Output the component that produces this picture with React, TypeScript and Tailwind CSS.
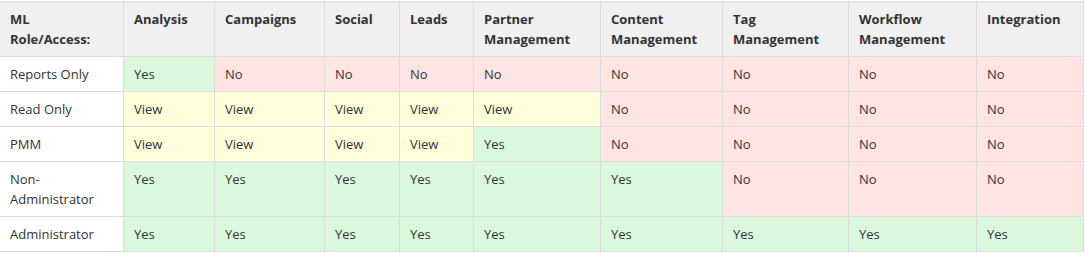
import React from "react";

type V = "Yes" | "No" | "View";

const headers = [
  "ML Role/Access:",
  "Analysis",
  "Campaigns",
  "Social",
  "Leads",
  "Partner Management",
  "Content Management",
  "Tag Management",
  "Workflow Management",
  "Integration",
];

const widths = [
  "w-[124px]",
  "w-[91px]",
  "w-[110px]",
  "w-[75px]",
  "w-[74px]",
  "w-[127px]",
  "w-[122px]",
  "w-[126px]",
  "w-[128px]",
  "w-[107px]",
];

const rows: { role: string; vals: V[] }[] = [
  { role: "Reports Only", vals: ["Yes", "No", "No", "No", "No", "No", "No", "No", "No"] },
  { role: "Read Only", vals: ["View", "View", "View", "View", "View", "No", "No", "No", "No"] },
  { role: "PMM", vals: ["View", "View", "View", "View", "Yes", "No", "No", "No", "No"] },
  { role: "Non-Administrator", vals: ["Yes", "Yes", "Yes", "Yes", "Yes", "Yes", "No", "No", "No"] },
  { role: "Administrator", vals: ["Yes", "Yes", "Yes", "Yes", "Yes", "Yes", "Yes", "Yes", "Yes"] },
];

const bg: Record<V, string> = {
  Yes: "bg-[#dcf8dc]",
  No: "bg-[#ffe4e4]",
  View: "bg-[#ffffdc]",
};

export default function App() {
  return (
    <div className="w-[1085px] h-[253px] bg-white overflow-hidden pt-px font-['Open_Sans',sans-serif] text-[13px] leading-[20px] text-[#333]">
      <table className="table-fixed border-collapse w-[1084px] -ml-px">
        <thead>
          <tr>
            {headers.map((h, i) => (
              <th
                key={h}
                className={`${widths[i]} bg-[#f0f0f0] border border-[#dddddd] px-[10px] pt-[7px] pb-[7px] text-left align-top font-bold text-[#333]`}
              >
                {h === "ML Role/Access:" ? (
                  <>
                    ML
                    <br />
                    Role/Access:
                  </>
                ) : (
                  h
                )}
              </th>
            ))}
          </tr>
        </thead>
        <tbody>
          {rows.map((r) => (
            <tr key={r.role}>
              <td className="border border-[#dddddd] px-[10px] py-[7px] align-top bg-white">
                {r.role === "Non-Administrator" ? (
                  <>
                    Non-
                    <br />
                    Administrator
                  </>
                ) : (
                  r.role
                )}
              </td>
              {r.vals.map((v, i) => (
                <td
                  key={i}
                  className={`border border-[#dddddd] px-[10px] py-[7px] align-top ${bg[v]}`}
                >
                  {v}
                </td>
              ))}
            </tr>
          ))}
        </tbody>
      </table>
    </div>
  );
}
